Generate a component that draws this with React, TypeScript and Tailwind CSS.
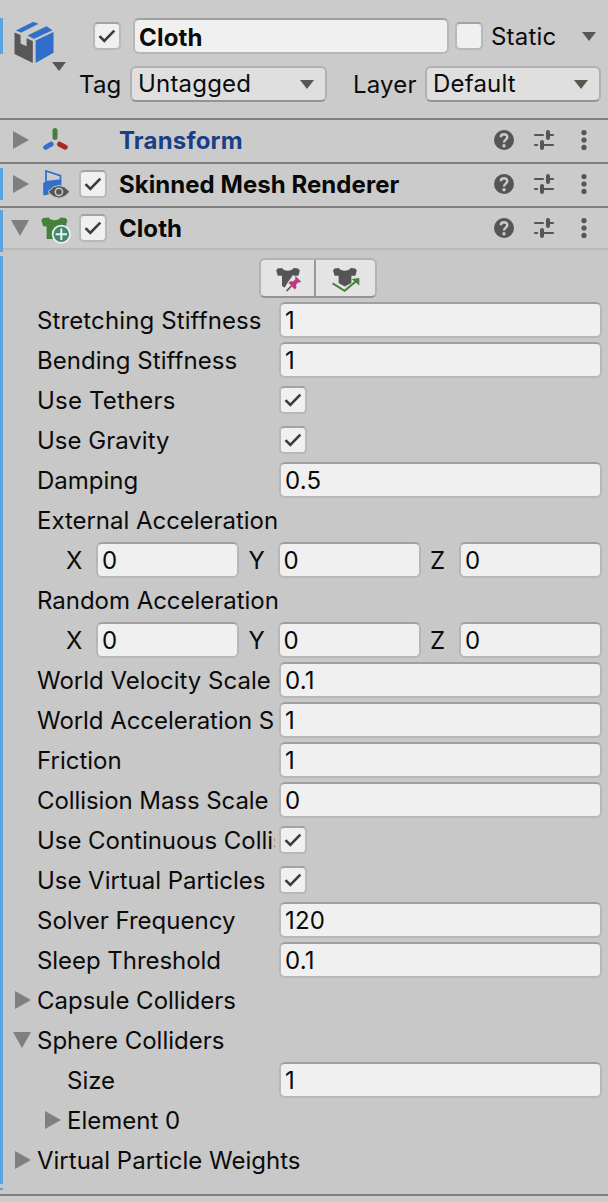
import type { ReactNode } from "react";

function Check({ checked = true }: { checked?: boolean }) {
  return (
    <span className="flex h-7 w-7 shrink-0 items-center justify-center rounded-[5px] border-2 border-[#b8b8b8] border-t-[#a3a3a3] bg-[#f0f0f0]">
      {checked && (
        <svg width="18" height="14" viewBox="0 0 18 14" fill="none">
          <path d="M1.5 7.2 6.3 12 16.3 1.6" stroke="#3c3c3c" strokeWidth="2.6" />
        </svg>
      )}
    </span>
  );
}

function Field({ children, className = "pt-0.5" }: { children?: ReactNode; className?: string }) {
  return (
    <div
      className={`flex h-9 items-center rounded-[6px] border-2 border-[#b7b7b7] border-t-[#a0a0a0] bg-[#f0f0f0] pl-1 tracking-[0.2px] ${className}`}
    >
      {children}
    </div>
  );
}

function Caret() {
  return (
    <svg width="14" height="9" viewBox="0 0 14 9" className="shrink-0">
      <path d="M0 0h14L7 9z" fill="#575850" />
    </svg>
  );
}

function Select({ children, className = "" }: { children: ReactNode; className?: string }) {
  return (
    <div
      className={`flex h-9 items-center justify-between rounded-[6px] border-2 border-[#b2b2b2] border-b-[#939393] bg-[#dfdfdf] pl-1.5 pr-[11px] ${className}`}
    >
      <span>{children}</span>
      <Caret />
    </div>
  );
}

function Fold({ open = false }: { open?: boolean }) {
  return (
    <svg width="18" height="18" viewBox="0 0 18 18" className="shrink-0">
      <path d={open ? "M0 1h18L9 17z" : "M2 0v18L18 9z"} fill="#7f7f7f" />
    </svg>
  );
}

function PrefabIcon() {
  return (
    <svg width="40" height="43" viewBox="0 0 40 43">
      <path d="M2.5 9.6 19 1.2l5 1.6L7.3 11.2z" fill="#316dca" stroke="#316dca" strokeWidth=".6" />
      <path d="M14 14.6 32.5 5.6l5.5 3.6-18 8.4z" fill="#316dca" stroke="#316dca" strokeWidth=".6" />
      <path d="M21.6 19.5 39.5 11v20.8L21.6 42z" fill="#316dca" />
      <path d="M.5 11.5 6.6 14v8.6l6 2.6v-8l6.2 2.9V42L.5 33z" fill="#575757" />
    </svg>
  );
}

function TransformIcon() {
  return (
    <svg width="30" height="30" viewBox="0 0 30 30" strokeLinecap="round" strokeWidth="5">
      <path d="M14 5.5v7" stroke="#47803c" />
      <path d="M10.1 19.2 4.7 22.3" stroke="#346fc9" />
      <path d="M18.6 19.2l5.7 3" stroke="#a82a20" />
    </svg>
  );
}

function SkinnedIcon() {
  return (
    <svg width="30" height="30" viewBox="0 0 30 30">
      <path d="M5 12V2l14.4 4.6v6" fill="none" stroke="#346fc9" strokeWidth="1.8" />
      <path d="M2.2 14 5 12 17 10.5l3.4.5v6L8 21l-.2 4.2L4.6 26.2H2.2z" fill="#346fc9" />
      <path d="M7 22.8Q17.9 10 28.8 22.8 17.9 35.6 7 22.8z" fill="#555" stroke="#cbcbcb" strokeWidth="1" />
      <circle cx="17.9" cy="22.8" r="4.4" fill="#cbcbcb" />
      <circle cx="17.9" cy="22.8" r="2.9" fill="#555" />
    </svg>
  );
}

function ClothIcon() {
  return (
    <svg width="30" height="32" viewBox="0 0 30 32" className="mt-0.5 block">
      <path d="M7.6 4.6c2 3.6 9.8 3.6 11.8 0l5 .4 1.9 2-1.4 6.2-5.2.6V26H5.6V13.4l-3.4-.2L.2 7l2-2z" fill="#47803c" />
      <circle cx="20.3" cy="21.2" r="9.5" fill="#efefef" />
      <circle cx="20.3" cy="21.2" r="7.8" fill="#3f8975" />
      <path d="M20.3 15.5v11.4M14.6 21.2H26" stroke="#f0f0f0" strokeWidth="2" />
    </svg>
  );
}

function PinIcon() {
  return (
    <svg width="26" height="24" viewBox="0 0 26 24" className="shrink-0">
      <path d="M6 0c2 3.6 9.6 3.6 11.6 0l4.6.5 1.6 2-1.4 5.3h-4V20h-9L6 18V7.8H1.8L.2 2.5l1.4-2z" fill="#555" />
      <path d="m17 7 3 2 6 1v6l-4 6h-3l-4-2-6 5v-6l3-5z" fill="#e4e4e4" />
      <path d="M15.5 18 10.5 23" stroke="#555" strokeWidth="1.7" />
      <path d="m19.7 8.2 5.6 5.5-1.8.8-1.2-.3-2.2 2.6.2 3-1.5 1.6-6.2-6.6 1.7-1.6 2.8.2 2.5-2.3-.6-1.5z" fill="#c13680" />
    </svg>
  );
}

function ShirtArrowIcon() {
  return (
    <svg width="29" height="26" viewBox="0 0 29 26" className="shrink-0">
      <path d="M7.8 0c2 3.6 9.8 3.6 11.8 0l4.6.5 1.6 2-1.4 5.3h-4V15l-6.7 3.6L7.6 15V7.8h-4L2 2.5l1.4-2z" fill="#555" />
      <path d="M1.6 15.4 13.6 22.8 25.6 12.8" fill="none" stroke="#47803c" strokeWidth="2.1" />
      <path d="M20.6 11 28.3 10v7.4z" fill="#47803c" />
    </svg>
  );
}

function HeaderTools() {
  return (
    <div className="ml-auto flex items-center pr-[21px]">
      <svg width="20" height="20" viewBox="0 0 20 20">
        <circle cx="10" cy="10" r="10" fill="#555" />
        <path d="M6.8 7.2C6.8 3.3 13.3 3.3 13.3 7.1 13.3 9.6 10 9.6 10 12.6" fill="none" stroke="#cbcbcb" strokeWidth="2.4" />
        <circle cx="10" cy="15.8" r="1.7" fill="#cbcbcb" />
      </svg>
      <svg width="20" height="20" viewBox="0 0 20 20" className="ml-5" stroke="#555" strokeLinecap="round">
        <path d="M1 5h8M17.5 5H19M1 15h2.2M10 15h9" strokeWidth="2" />
        <path d="M14 2v6M8 12v6" strokeWidth="4" />
        <path d="M14 5h4M8 15h4" strokeWidth="2" />
      </svg>
      <svg width="6" height="20" viewBox="0 0 6 20" className="ml-[27px]" fill="#555">
        <circle cx="3" cy="2.6" r="2.6" />
        <circle cx="3" cy="10" r="2.6" />
        <circle cx="3" cy="17.4" r="2.6" />
      </svg>
    </div>
  );
}

function Header({
  title,
  icon,
  bar,
  open,
  plain,
  className = "",
}: {
  title: string;
  icon: ReactNode;
  bar: string;
  open?: boolean;
  plain?: boolean;
  className?: string;
}) {
  return (
    <div className={`flex bg-[#cbcbcb] ${className}`}>
      <div className={`w-[3px] shrink-0 ${bar}`} />
      <div className="flex h-10 grow items-center pl-2">
        <Fold open={open} />
        <span className="ml-3 w-[30px]">{icon}</span>
        <span className="ml-2 w-7">{!plain && <Check />}</span>
        <span className={`ml-3 pt-0.5 font-bold ${plain ? "tracking-[0.2px] text-[#1a3f87]" : "tracking-[0.05px] text-[#090909]"}`}>
          {title}
        </span>
        <HeaderTools />
      </div>
    </div>
  );
}

function Row({
  label,
  value,
  check,
  tracking = "",
}: {
  label: string;
  value?: string;
  check?: boolean;
  tracking?: string;
}) {
  return (
    <div className="flex h-10 items-center pl-[34px] pr-1.5">
      <span className={`w-[238px] shrink-0 overflow-hidden whitespace-nowrap pt-0.5 ${tracking}`}>{label}</span>
      <div className="ml-1 flex grow">{check ? <Check /> : <Field className="grow pt-0.5">{value}</Field>}</div>
    </div>
  );
}

function Vector({ label }: { label: string }) {
  return (
    <>
      <div className="flex h-10 items-center pl-[34px] pt-0.5 tracking-[-0.03px]">{label}</div>
      <div className="flex h-10 items-center justify-between pl-[63px] pr-1.5">
        {["X", "Y", "Z"].map((axis) => (
          <div key={axis} className="flex items-center">
            <span className={axis === "X" ? "w-[30px] pt-0.5" : "w-[29px] pt-0.5"}>{axis}</span>
            <Field className="w-[143px] pt-0.5">0</Field>
          </div>
        ))}
      </div>
    </>
  );
}

function FoldRow({ label, open, nested }: { label: string; open?: boolean; nested?: boolean }) {
  return (
    <div className={`flex h-10 items-center ${nested ? "pl-10" : "pl-[10px]"}`}>
      <Fold open={open} />
      <span className="ml-1.5 pt-0.5">{label}</span>
    </div>
  );
}

export default function App() {
  return (
    <div className="flex h-[1202px] w-[608px] flex-col overflow-hidden bg-[#c8c8c8] font-['Inter',sans-serif] text-[24px] leading-[30px] text-[#0b0b0b]">
      <div className="flex h-[120px] shrink-0 border-b-2 border-[#7f7f7f] bg-[#cbcbcb] pt-[18px]">
        <div className="h-9 w-[3px] bg-[#58a3e0]" />
        <div className="flex w-[64px] flex-col pl-[10.5px] pt-[2.5px]">
          <PrefabIcon />
          <div className="-mt-[1.5px] pl-[38px]">
            <Caret />
          </div>
        </div>
        <div className="flex grow flex-col gap-3 tracking-[0.2px]">
          <div className="flex h-9 items-center pl-[26px]">
            <Check />
            <Field className="ml-3 w-[316px] pt-1 font-bold">Cloth</Field>
            <span className="ml-1.5">
              <Check checked={false} />
            </span>
            <span className="ml-2 pt-0.5">Static</span>
            <span className="ml-auto mr-3">
              <Caret />
            </span>
          </div>
          <div className="flex h-9 items-center pl-3">
            <span className="w-[51px] pt-0.5">Tag</span>
            <Select className="w-[197px]">Untagged</Select>
            <span className="ml-[26px] w-[72px] pt-0.5">Layer</span>
            <Select className="w-[176px]">Default</Select>
          </div>
        </div>
      </div>
      <Header title="Transform" icon={<TransformIcon />} bar="" plain className="h-11 shrink-0 border-b-2 border-[#7f7f7f]" />
      <Header
        title="Skinned Mesh Renderer"
        icon={<SkinnedIcon />}
        bar="mt-1 h-8 bg-[#58a3e0]"
        className="h-11 shrink-0 border-b-2 border-[#7f7f7f]"
      />
      <Header title="Cloth" icon={<ClothIcon />} bar="mt-0.5 h-10 bg-[#58a3e0]" open className="h-[42px] shrink-0 border-b-2 border-[#b9b9b9]" />
      <div className="flex h-[946px] shrink-0 border-b-2 border-[#7f7f7f]">
        <div className="flex w-[3px] shrink-0 flex-col">
          <div className="h-0.5 bg-[#58a3e0]" />
          <div className="mt-1 h-[928px] bg-[#58a3e0]" />
          <div className="mt-1 h-0.5 bg-[#58a3e0]" />
        </div>
        <div className="grow">
          <div className="flex h-[50px] pl-[256px] pt-2">
            <div className="flex h-10 w-[118px] rounded-[6px] border-2 border-[#b2b2b2] border-b-[#939393] bg-[#e4e4e4]">
              <div className="flex w-[55px] items-start border-r-2 border-[#999] pl-[15px] pt-2">
                <PinIcon />
              </div>
              <div className="flex items-start pl-[15px] pt-2">
                <ShirtArrowIcon />
              </div>
            </div>
          </div>
          <Row label="Stretching Stiffness" value="1" tracking="tracking-[0.12px]" />
          <Row label="Bending Stiffness" value="1" tracking="tracking-[0.04px]" />
          <Row label="Use Tethers" check tracking="tracking-[0.18px]" />
          <Row label="Use Gravity" check />
          <Row label="Damping" value="0.5" />
          <Vector label="External Acceleration" />
          <Vector label="Random Acceleration" />
          <Row label="World Velocity Scale" value="0.1" />
          <Row label="World Acceleration Scale" value="1" tracking="tracking-[-0.05px]" />
          <Row label="Friction" value="1" />
          <Row label="Collision Mass Scale" value="0" tracking="tracking-[-0.08px]" />
          <Row label="Use Continuous Collision" check tracking="tracking-[-0.04px]" />
          <Row label="Use Virtual Particles" check tracking="tracking-[-0.04px]" />
          <Row label="Solver Frequency" value="120" />
          <Row label="Sleep Threshold" value="0.1" tracking="tracking-[-0.05px]" />
          <FoldRow label="Capsule Colliders" />
          <FoldRow label="Sphere Colliders" open />
          <div className="flex h-10 items-center pl-16 pr-1.5">
            <span className="w-[212px] pt-0.5">Size</span>
            <Field className="grow pt-0.5">1</Field>
          </div>
          <FoldRow label="Element 0" nested />
          <FoldRow label="Virtual Particle Weights" />
        </div>
      </div>
      <div className="grow bg-[#cbcbcb]" />
    </div>
  );
}
